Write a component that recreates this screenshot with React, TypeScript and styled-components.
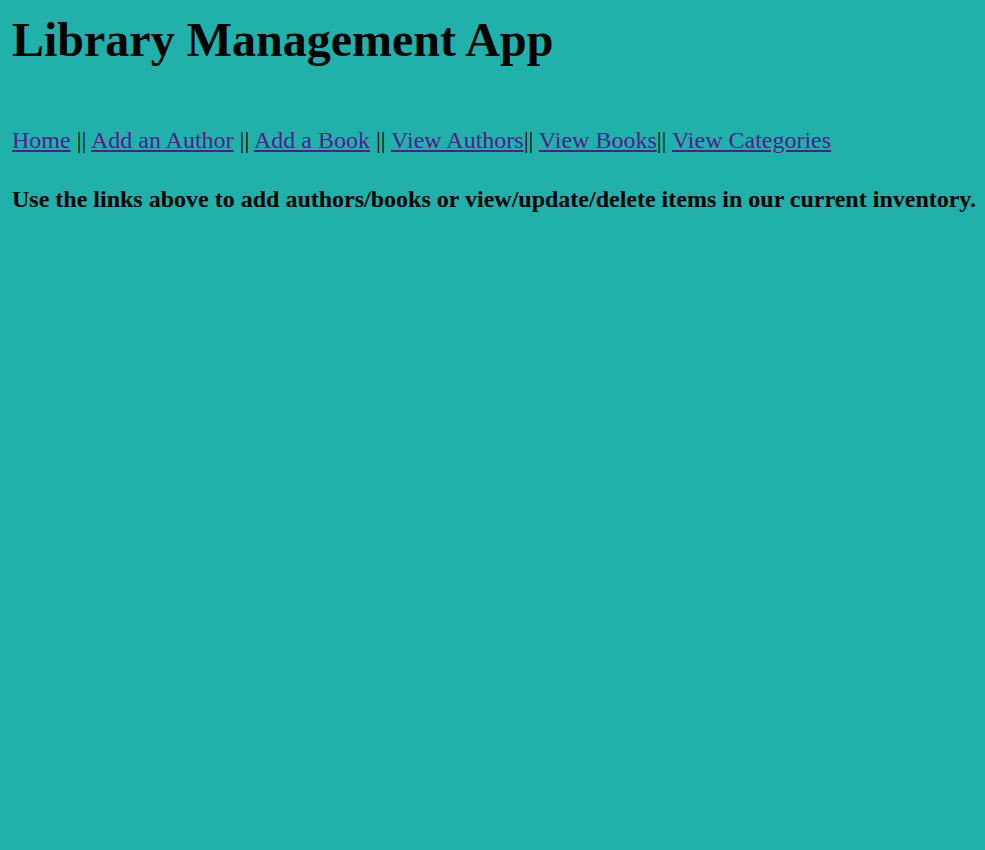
import React from "react";
import styled, { createGlobalStyle } from "styled-components";

const GlobalStyle = createGlobalStyle`
  html, body {
    margin: 0;
    padding: 0;
    background: #20b2aa;
  }
  body {
    font-family: "Liberation Serif", "Times New Roman", serif;
    min-height: 850px;
  }
`;

const Page = styled.div`
  padding: 0 0 0 12px;
  display: flex;
  flex-direction: column;
`;

const Title = styled.h1`
  font-size: 48px;
  font-weight: bold;
  margin: 12px 0 0;
  line-height: 55px;
  color: #000;
`;

const Nav = styled.nav`
  font-size: 24px;
  margin-top: 60px;
  line-height: 27px;
  color: #000;
`;

const NavLink = styled.a`
  color: #551a8b;
  text-decoration: underline;
`;

const Info = styled.h2`
  font-size: 24px;
  font-weight: bold;
  margin: 32px 0 0;
  line-height: 27px;
  white-space: nowrap;
  color: #000;
`;

const links: { label: string; sep: string }[] = [
  { label: "Home", sep: " || " },
  { label: "Add an Author", sep: " || " },
  { label: "Add a Book", sep: " || " },
  { label: "View Authors", sep: "|| " },
  { label: "View Books", sep: "|| " },
  { label: "View Categories", sep: "" },
];

export default function App() {
  return (
    <>
      <GlobalStyle />
      <Page>
        <Title>Library Management App</Title>
        <Nav>
          {links.map((l) => (
            <React.Fragment key={l.label}>
              <NavLink href="#">{l.label}</NavLink>
              {l.sep}
            </React.Fragment>
          ))}
        </Nav>
        <Info>
          Use the links above to add authors/books or view/update/delete items in our current inventory.
        </Info>
      </Page>
    </>
  );
}
